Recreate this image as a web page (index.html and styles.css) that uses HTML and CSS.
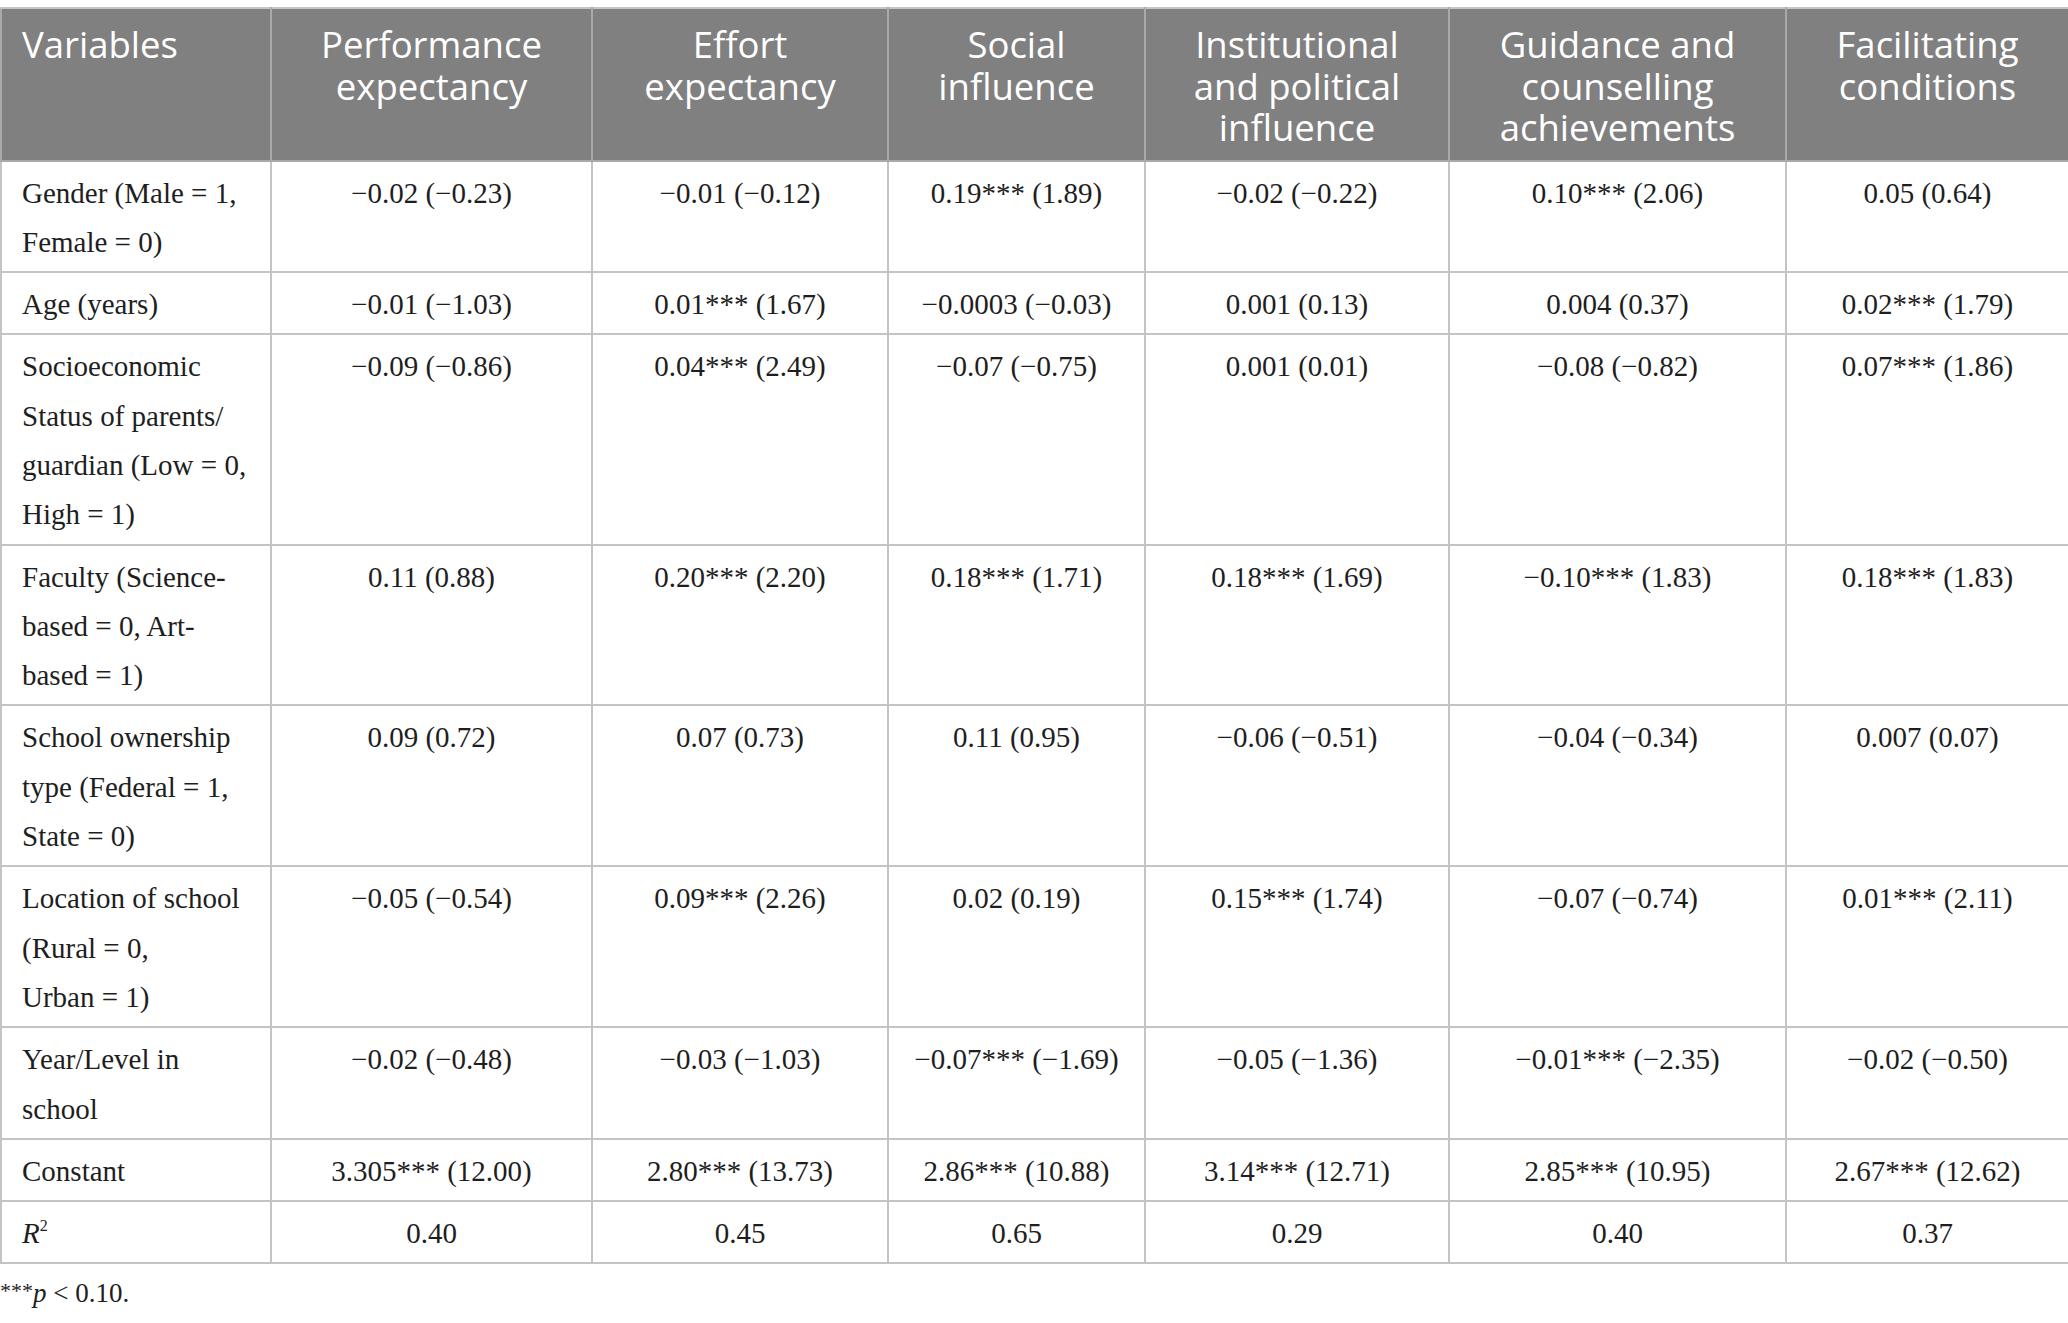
FILE: index.html
```html
<!DOCTYPE html>
<html lang="en">
<head>
    <meta charset="UTF-8">
    <meta name="viewport" content="width=device-width, initial-scale=1.0">
    <title>Regression results</title>
    <link rel="stylesheet" href="styles.css">
</head>
<body>

    <table class="results">
        <colgroup>
            <col class="col-var">
            <col class="col-perf">
            <col class="col-effort">
            <col class="col-social">
            <col class="col-inst">
            <col class="col-guide">
            <col class="col-facil">
        </colgroup>
        <thead>
            <tr>
                <th>Variables</th>
                <th>Performance expectancy</th>
                <th>Effort expectancy</th>
                <th>Social influence</th>
                <th>Institutional and political influence</th>
                <th>Guidance and counselling achievements</th>
                <th>Facilitating conditions</th>
            </tr>
        </thead>
        <tbody>
            <tr>
                <td>Gender (Male = 1,<br>Female = 0)</td>
                <td>−0.02 (−0.23)</td>
                <td>−0.01 (−0.12)</td>
                <td>0.19*** (1.89)</td>
                <td>−0.02 (−0.22)</td>
                <td>0.10*** (2.06)</td>
                <td>0.05 (0.64)</td>
            </tr>
            <tr>
                <td>Age (years)</td>
                <td>−0.01 (−1.03)</td>
                <td>0.01*** (1.67)</td>
                <td>−0.0003 (−0.03)</td>
                <td>0.001 (0.13)</td>
                <td>0.004 (0.37)</td>
                <td>0.02*** (1.79)</td>
            </tr>
            <tr>
                <td>Socioeconomic<br>Status of parents/<br>guardian (Low = 0,<br>High = 1)</td>
                <td>−0.09 (−0.86)</td>
                <td>0.04*** (2.49)</td>
                <td>−0.07 (−0.75)</td>
                <td>0.001 (0.01)</td>
                <td>−0.08 (−0.82)</td>
                <td>0.07*** (1.86)</td>
            </tr>
            <tr>
                <td>Faculty (Science-<br>based = 0, Art-<br>based = 1)</td>
                <td>0.11 (0.88)</td>
                <td>0.20*** (2.20)</td>
                <td>0.18*** (1.71)</td>
                <td>0.18*** (1.69)</td>
                <td>−0.10*** (1.83)</td>
                <td>0.18*** (1.83)</td>
            </tr>
            <tr>
                <td>School ownership<br>type (Federal = 1,<br>State = 0)</td>
                <td>0.09 (0.72)</td>
                <td>0.07 (0.73)</td>
                <td>0.11 (0.95)</td>
                <td>−0.06 (−0.51)</td>
                <td>−0.04 (−0.34)</td>
                <td>0.007 (0.07)</td>
            </tr>
            <tr>
                <td>Location of school<br>(Rural = 0,<br>Urban = 1)</td>
                <td>−0.05 (−0.54)</td>
                <td>0.09*** (2.26)</td>
                <td>0.02 (0.19)</td>
                <td>0.15*** (1.74)</td>
                <td>−0.07 (−0.74)</td>
                <td>0.01*** (2.11)</td>
            </tr>
            <tr>
                <td>Year/Level in<br>school</td>
                <td>−0.02 (−0.48)</td>
                <td>−0.03 (−1.03)</td>
                <td>−0.07*** (−1.69)</td>
                <td>−0.05 (−1.36)</td>
                <td>−0.01*** (−2.35)</td>
                <td>−0.02 (−0.50)</td>
            </tr>
            <tr>
                <td>Constant</td>
                <td>3.305*** (12.00)</td>
                <td>2.80*** (13.73)</td>
                <td>2.86*** (10.88)</td>
                <td>3.14*** (12.71)</td>
                <td>2.85*** (10.95)</td>
                <td>2.67*** (12.62)</td>
            </tr>
            <tr>
                <td><i>R</i><sup>2</sup></td>
                <td>0.40</td>
                <td>0.45</td>
                <td>0.65</td>
                <td>0.29</td>
                <td>0.40</td>
                <td>0.37</td>
            </tr>
        </tbody>
    </table>

    <p class="footnote"><sup>***</sup><i>p</i> &lt; 0.10.</p>

</body>
</html>
```

FILE: styles.css
```css
/* Page */
body {
    margin: 0;
    padding-top: 7px;
    background-color: #fff;
    color: #1e1e1e;
    font-family: "Liberation Serif", "Times New Roman", serif;
}

/* Table */
.results {
    width: 2068px;
    border-collapse: collapse;
    table-layout: fixed;
}
.col-var { width: 270px; }
.col-perf { width: 321px; }
.col-effort { width: 296px; }
.col-social { width: 257px; }
.col-inst { width: 304px; }
.col-guide { width: 337px; }
.col-facil { width: 283px; }

.results th {
    background-color: #7f807f;
    color: #fff;
    font-family: "Open Sans", "Noto Sans", sans-serif;
    font-weight: 400;
    font-size: 36.5px;
    line-height: 41.5px;
    text-align: center;
    vertical-align: top;
    padding: 15px 24px 11px;
    border: 2px solid #a9a9a9;
    border-top-color: #c4c4c4;
}
.results th:first-child {
    text-align: left;
    padding-left: 20px;
}

.results td {
    font-size: 29px;
    line-height: 49.3px;
    text-align: center;
    vertical-align: top;
    padding: 7px 10px 4px;
    border: 2px solid #c4c4c4;
}
.results td:first-child {
    text-align: left;
    padding-left: 20px;
    padding-right: 8px;
}
.results sup {
    font-size: 16px;
    line-height: 0;
    vertical-align: 12px;
}

/* Note under the table */
.footnote {
    margin: 12px 0 0;
    font-size: 27px;
    line-height: 34px;
}
.footnote sup {
    font-size: 22px;
    line-height: 0;
    vertical-align: 4px;
}
```
